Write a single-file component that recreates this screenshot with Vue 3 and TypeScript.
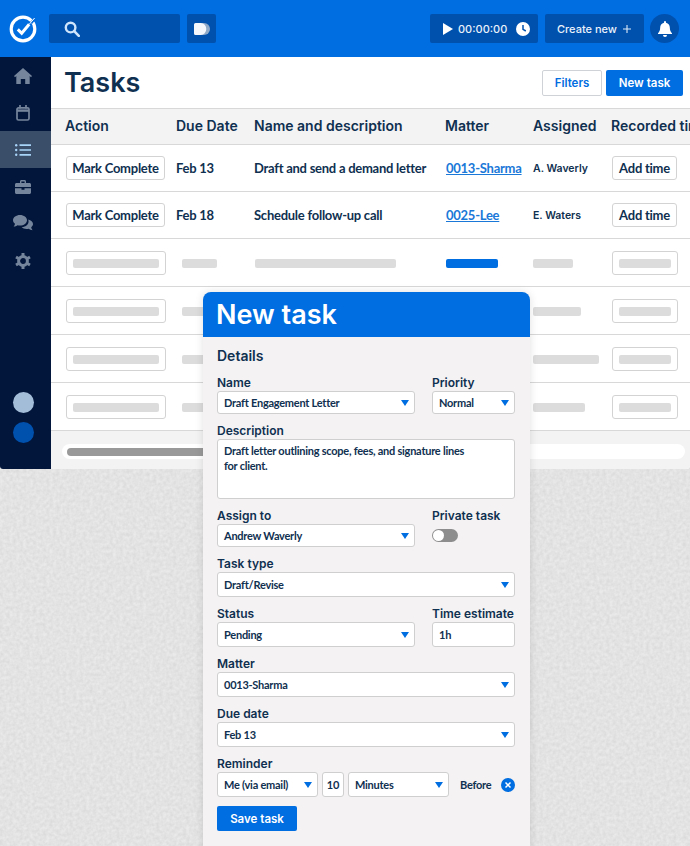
<script setup lang="ts">
interface TaskRow {
  due: string;
  name: string;
  matter: string;
  assigned: string;
}

interface SkeletonRow {
  matterActive: boolean;
  assignedWidth: number;
}

const tasks: TaskRow[] = [
  { due: 'Feb 13', name: 'Draft and send a demand letter', matter: '0013-Sharma', assigned: 'A. Waverly' },
  { due: 'Feb 18', name: 'Schedule follow-up call', matter: '0025-Lee', assigned: 'E. Waters' },
];

const skeletons: SkeletonRow[] = [
  { matterActive: true, assignedWidth: 40 },
  { matterActive: false, assignedWidth: 48 },
  { matterActive: false, assignedWidth: 66 },
  { matterActive: false, assignedWidth: 52 },
];
</script>

<template>
  <div class="page">
    <!-- paper grain behind the app window -->
    <svg class="grain" width="690" height="846" aria-hidden="true">
      <filter id="grain-noise">
        <feTurbulence type="fractalNoise" baseFrequency="0.3" numOctaves="2" seed="4" />
        <feColorMatrix values="0 0 0 0 0  0 0 0 0 0  0 0 0 0 0  0.1 0 0 0 -0.02" />
      </filter>
      <rect width="690" height="846" filter="url(#grain-noise)" />
    </svg>

    <div class="app">
      <header class="topbar">
        <svg class="logo" viewBox="0 0 28 28" width="28" height="28" aria-label="Logo">
          <circle cx="14" cy="14" r="11.8" fill="none" stroke="#fff" stroke-width="3.200" />
          <path d="M22 8.200L27 2.500" fill="none" stroke="#006de0" stroke-width="2.600" />
          <path d="M8.800 14.400l3.900 3.800 7.500-8.900" fill="none" stroke="#fff" stroke-width="3" />
          <path d="M20.200 9.300l5.400-6.300" fill="none" stroke="#fff" stroke-width="1" />
        </svg>
        <div class="search">
          <svg viewBox="0 0 16 16" width="16" height="16">
            <circle cx="6.600" cy="6.600" r="4.800" fill="none" stroke="#cfe5fb" stroke-width="2.400" />
            <path d="M10.200 10.200l4.600 4.600" stroke="#cfe5fb" stroke-width="2.600" stroke-linecap="round" />
          </svg>
        </div>
        <div class="icon-box">
          <svg viewBox="0 0 16 12" width="16" height="12">
            <path d="M6 0h4a6 6 0 0 1 0 12H6z" fill="#8fa9c9" />
            <path d="M1.500 0h5.300a5.500 6 0 0 1 0 12H1.500A1.500 1.500 0 0 1 0 10.500V1.500A1.500 1.500 0 0 1 1.500 0z" fill="#f4f7fb" />
          </svg>
        </div>
        <div class="timer">
          <svg viewBox="0 0 10 12" width="10" height="12"><path d="M0 0l10 6-10 6z" fill="#fff" /></svg>
          <span>00:00:00</span>
          <svg viewBox="0 0 14 14" width="14" height="14">
            <circle cx="7" cy="7" r="7" fill="#fff" />
            <path d="M7 3v4.300l2.800 1.700" fill="none" stroke="#0050ad" stroke-width="1.500" />
          </svg>
        </div>
        <div class="create">
          <span>Create new</span>
          <svg viewBox="0 0 8 8" width="8" height="8"><path d="M4 0v8M0 4h8" stroke="#dce9f8" stroke-width="1.100" /></svg>
        </div>
        <div class="bell">
          <svg viewBox="0 0 14 16" width="14" height="16">
            <path d="M7 0a1 1 0 0 1 1 1v.700c2.500.500 3.800 2.500 3.800 4.800 0 3.300 1 4.400 2.200 5.700v.800H0v-.800c1.200-1.300 2.200-2.400 2.200-5.700C2.200 4.200 3.500 2.200 6 1.700V1a1 1 0 0 1 1-1zM5 14h4a2 2 0 0 1-4 0z" fill="#fff" />
          </svg>
        </div>
      </header>

      <div class="shell">
        <nav class="sidebar">
          <div class="nav-item">
            <svg viewBox="0 0 18 16" width="18" height="16"><path d="M9 0l9 8-1 1.200-1.300-1.100V16h-4.500v-5H6.800v5H2.300V8.100L1 9.200 0 8z" fill="#75859c" /></svg>
          </div>
          <div class="nav-item">
            <svg viewBox="0 0 14 16" width="14" height="16">
              <rect x="1" y="2.800" width="12" height="12.200" rx="1.500" fill="none" stroke="#75859c" stroke-width="1.700" />
              <path d="M1 5.600h12" stroke="#75859c" stroke-width="2.400" />
              <path d="M4 0v3.500M10 0v3.500" stroke="#75859c" stroke-width="1.700" />
            </svg>
          </div>
          <div class="nav-item nav-item--active">
            <svg viewBox="0 0 16 12" width="16" height="12">
              <path d="M4.500 1.200H16M4.500 6H16M4.500 10.800H16" stroke="#a8d4f8" stroke-width="1.700" />
              <circle cx="1.200" cy="1.200" r="1.200" fill="#a8d4f8" />
              <circle cx="1.200" cy="6" r="1.200" fill="#a8d4f8" />
              <circle cx="1.200" cy="10.800" r="1.200" fill="#a8d4f8" />
            </svg>
          </div>
          <div class="nav-item">
            <svg viewBox="0 0 16 14" width="16" height="14">
              <path d="M5 3V1.500C5 .700 5.600 0 6.400 0h3.200c.800 0 1.400.700 1.400 1.500V3h3.500c.800 0 1.500.700 1.500 1.500V7H0V4.500C0 3.700.700 3 1.500 3zm1.400 0h3.200V1.400H6.400zM0 8.200h6.500v1.500h3V8.200H16v4.300c0 .800-.7 1.500-1.500 1.500h-13C.700 14 0 13.300 0 12.500z" fill="#75859c" />
            </svg>
          </div>
          <div class="nav-item">
            <svg viewBox="0 0 20 17" width="20" height="17">
              <path d="M7 0c3.900 0 7 2.300 7 5.300s-3.100 5.300-7 5.300c-.900 0-1.700-.100-2.500-.400C3.600 11 2.200 11.500.600 11.500c.800-.800 1.300-1.700 1.400-2.700C.800 7.900 0 6.700 0 5.300 0 2.300 3.100 0 7 0z" fill="#75859c" />
              <path d="M15.300 4.400C18 5 20 6.800 20 9c0 1.300-.700 2.400-1.800 3.200.100.900.600 2 1.400 3-1.600-.100-2.900-.700-3.900-1.500-.700.200-1.400.300-2.200.300-2 0-3.800-.800-4.900-2 4.300-.100 8-2.700 6.700-7.600z" fill="#75859c" />
            </svg>
          </div>
          <div class="nav-item">
            <svg viewBox="0 0 16 16" width="16" height="16">
              <circle cx="8" cy="8" r="4.400" fill="none" stroke="#75859c" stroke-width="3" />
              <path d="M8 0v3M8 13v3M1 4l2.600 1.500M12.400 10.500L15 12M1 12l2.600-1.500M12.400 5.500L15 4" stroke="#75859c" stroke-width="3" />
            </svg>
          </div>
          <div class="avatars">
            <span class="avatar avatar--light"></span>
            <span class="avatar avatar--blue"></span>
          </div>
        </nav>

        <main class="content">
          <div class="title-row">
            <h1>Tasks</h1>
            <div class="title-actions">
              <button class="btn-outline">Filters</button>
              <button class="btn-primary">New task</button>
            </div>
          </div>

          <div class="row row--head">
            <span>Action</span>
            <span>Due Date</span>
            <span>Name and description</span>
            <span>Matter</span>
            <span>Assigned</span>
            <span>Recorded time</span>
          </div>

          <div v-for="task in tasks" :key="task.matter" class="row row--task">
            <span><button class="btn-small btn-small--action">Mark Complete</button></span>
            <span>{{ task.due }}</span>
            <span>{{ task.name }}</span>
            <a class="matter-link">{{ task.matter }}</a>
            <span class="assigned">{{ task.assigned }}</span>
            <span><button class="btn-small btn-small--time">Add time</button></span>
          </div>

          <div v-for="(sk, i) in skeletons" :key="i" class="row row--skeleton">
            <span class="sk-button sk-button--action"><i></i></span>
            <span class="bar bar--date"></span>
            <span class="bar bar--name"></span>
            <span class="bar bar--matter" :class="{ 'bar--active': sk.matterActive }"></span>
            <span class="bar" :style="{ width: sk.assignedWidth + 'px' }"></span>
            <span class="sk-button sk-button--time"><i></i></span>
          </div>

          <div class="table-foot">
            <div class="scroll-track"><div class="scroll-thumb"></div></div>
          </div>
        </main>
      </div>
    </div>

    <section class="modal">
      <div class="modal-head">New task</div>
      <form class="modal-body" @submit.prevent>
        <h2>Details</h2>

        <div class="two-col two-col--first">
          <label class="field">
            <span class="label">Name</span>
            <span class="select select--short">Draft Engagement Letter</span>
          </label>
          <label class="field">
            <span class="label">Priority</span>
            <span class="select select--short">Normal</span>
          </label>
        </div>

        <label class="field field--gap">
          <span class="label">Description</span>
          <span class="textarea">Draft letter outlining scope, fees, and signature lines<br />for client.</span>
        </label>

        <div class="two-col two-col--gap">
          <label class="field">
            <span class="label">Assign to</span>
            <span class="select select--short">Andrew Waverly</span>
          </label>
          <div class="field">
            <span class="label">Private task</span>
            <span class="toggle"><i></i></span>
          </div>
        </div>

        <label class="field field--gap">
          <span class="label">Task type</span>
          <span class="select">Draft/Revise</span>
        </label>

        <div class="two-col two-col--gap">
          <label class="field">
            <span class="label">Status</span>
            <span class="select">Pending</span>
          </label>
          <label class="field">
            <span class="label">Time estimate</span>
            <span class="input">1h</span>
          </label>
        </div>

        <label class="field field--gap">
          <span class="label">Matter</span>
          <span class="select">0013-Sharma</span>
        </label>

        <label class="field field--gap">
          <span class="label">Due date</span>
          <span class="select">Feb 13</span>
        </label>

        <div class="field field--gap">
          <span class="label">Reminder</span>
          <div class="reminder">
            <span class="select select--who">Me (via email)</span>
            <span class="input input--num">10</span>
            <span class="select select--unit">Minutes</span>
            <span class="before">Before</span>
            <svg viewBox="0 0 14 14" width="14" height="14">
              <circle cx="7" cy="7" r="7" fill="#006de0" />
              <path d="M4.500 4.500l5 5M9.500 4.500l-5 5" stroke="#fff" stroke-width="1.500" />
            </svg>
          </div>
        </div>

        <button class="btn-primary btn-save">Save task</button>
      </form>
    </section>
  </div>
</template>

<style>
html,
body {
  margin: 0;
  background: #eaeaea;
}
</style>

<style scoped>
.page {
  position: relative;
  width: 690px;
  height: 846px;
  overflow: hidden;
  background: #eaeaea;
  font-family: Lato, 'Noto Sans', sans-serif;
  color: #0f3050;
}

.grain {
  position: absolute;
  left: 0;
  top: 0;
}

.app {
  position: relative;
  height: 469px;
  display: flex;
  flex-direction: column;
  background: #fff;
  border-radius: 0 0 4px 3px;
  overflow: hidden;
}

.topbar {
  height: 57px;
  flex: none;
  display: flex;
  align-items: center;
  background: #006de0;
  padding-left: 9px;
  box-sizing: border-box;
}

.logo {
  flex: none;
  margin-right: 12px;
}

.search {
  width: 131px;
  height: 29px;
  background: #0050ad;
  border-radius: 2px;
  display: flex;
  align-items: center;
  padding-left: 15px;
  box-sizing: border-box;
  margin-right: 7px;
}

.icon-box {
  width: 29px;
  height: 29px;
  background: #0050ad;
  border-radius: 2px;
  display: flex;
  align-items: center;
  justify-content: center;
  margin-right: 214px;
}

.timer,
.create {
  height: 29px;
  background: #0050ad;
  border-radius: 2px;
  display: flex;
  align-items: center;
  box-sizing: border-box;
  color: #eaf2fb;
  font-family: Inter, sans-serif;
  font-size: 11px;
  font-weight: 500;
}

.timer {
  width: 108px;
  padding-left: 13px;
  gap: 5px;
  margin-right: 7px;
}

.timer span {
  width: 50px;
  margin-right: 3px;
}

.create {
  width: 99px;
  padding-left: 12px;
  gap: 6px;
  margin-right: 6px;
}

.bell {
  width: 29px;
  height: 29px;
  border-radius: 50%;
  background: #0050ad;
  display: flex;
  align-items: center;
  justify-content: center;
}

.shell {
  flex: 1;
  display: flex;
  min-height: 0;
}

.sidebar {
  width: 51px;
  flex: none;
  background: #02153a;
  display: flex;
  flex-direction: column;
}

.nav-item {
  height: 37px;
  display: flex;
  align-items: center;
  justify-content: center;
  padding-right: 5px;
}

.nav-item--active {
  background: #3a4d69;
}

.avatars {
  margin-top: 113px;
  padding-right: 5px;
  display: flex;
  flex-direction: column;
  align-items: center;
  gap: 9px;
}

.avatar {
  width: 21px;
  height: 21px;
  border-radius: 50%;
}

.avatar--light {
  background: #a3bdd9;
}

.avatar--blue {
  background: #0050ad;
}

.content {
  flex: 1;
  min-width: 0;
  display: flex;
  flex-direction: column;
  background: #fff;
}

.title-row {
  height: 51px;
  flex: none;
  display: flex;
  align-items: center;
  justify-content: space-between;
  padding: 0 7px 0 13px;
  box-sizing: border-box;
}

h1 {
  margin: 0;
  font-family: Inter, sans-serif;
  font-size: 27px;
  font-weight: 600;
  color: #0f3050;
}

.title-actions {
  display: flex;
  gap: 4px;
}

button {
  font-family: inherit;
  padding: 0;
}

.btn-outline {
  width: 60px;
  height: 26px;
  border: 1px solid #cfd3d8;
  border-radius: 2px;
  background: #fff;
  color: #006de0;
  font-family: Inter, sans-serif;
  font-size: 11.500px;
  font-weight: 600;
}

.btn-primary {
  width: 77px;
  height: 26px;
  border: none;
  border-radius: 2px;
  background: #006de0;
  color: #fff;
  font-family: Inter, sans-serif;
  font-size: 11.500px;
  font-weight: 600;
}

.row {
  flex: none;
  display: grid;
  grid-template-columns: 111px 78px 191px 88px 78px 79px;
  align-items: center;
  padding-left: 14px;
  border-bottom: 1px solid #d8d8d8;
  box-sizing: border-box;
  white-space: nowrap;
}

.row--head {
  height: 37px;
  padding-bottom: 2px;
  border-top: 1px solid #d8d8d8;
  background: #f4f3f4;
  font-family: Inter, sans-serif;
  font-size: 14px;
  font-weight: 600;
}

.row--task {
  height: 47px;
  font-size: 13px;
  font-weight: 700;
  letter-spacing: -0.25px;
}

.row--skeleton {
  height: 48px;
  padding-top: 1px;
}

.btn-small {
  height: 24px;
  margin-left: 1px;
  border: 1px solid #d3d3d3;
  border-radius: 3px;
  background: #fff;
  color: #0f3050;
  font-size: 13px;
  font-weight: 700;
  letter-spacing: -0.25px;
}

.btn-small--action {
  width: 99px;
}

.btn-small--time {
  width: 65px;
}

.matter-link {
  margin-left: 1px;
  color: #1a78d8;
  text-decoration: underline;
}

.assigned {
  font-family: Inter, sans-serif;
  font-size: 10.500px;
  font-weight: 600;
  letter-spacing: 0;
}

.bar {
  display: block;
  height: 9px;
  background: #dcdcdc;
  border-radius: 2px;
}

.bar--date {
  width: 35px;
  margin-left: 6px;
}

.bar--name {
  width: 141px;
  margin-left: 1px;
}

.bar--matter {
  width: 52px;
  margin-left: 1px;
  background: transparent;
}

.bar--active {
  background: #006de0;
}

.sk-button {
  display: flex;
  align-items: center;
  height: 24px;
  margin-left: 1px;
  padding: 0 6px;
  border: 1px solid #d3d3d3;
  border-radius: 3px;
  box-sizing: border-box;
}

.sk-button--action {
  width: 100px;
}

.sk-button--time {
  width: 66px;
}

.sk-button i {
  flex: 1;
  height: 9px;
  background: #dcdcdc;
  border-radius: 2px;
}

.table-foot {
  flex: 1;
  padding: 13px 5px 0 11px;
  background: #f4f3f4;
}

.scroll-track {
  height: 15px;
  border-radius: 8px;
  background: #fff;
  display: flex;
  align-items: center;
  padding-left: 5px;
}

.scroll-thumb {
  width: 300px;
  height: 8px;
  border-radius: 4px;
  background: #999;
}

.modal {
  position: absolute;
  left: 203px;
  top: 292px;
  width: 327px;
  height: 570px;
  background: #f4f2f3;
  border-radius: 8px 8px 0 0;
  box-shadow: 0 0 8px rgba(0, 0, 0, 0.12);
}

.modal-head {
  height: 45px;
  display: flex;
  align-items: center;
  padding-left: 13px;
  background: #006de0;
  border-radius: 8px 8px 0 0;
  color: #fff;
  font-family: Inter, sans-serif;
  font-size: 27px;
  font-weight: 600;
}

.modal-body {
  padding: 10px 15px 0 14px;
  display: flex;
  flex-direction: column;
}

h2 {
  margin: 0;
  height: 17px;
  line-height: 17px;
  font-family: Inter, sans-serif;
  font-size: 14px;
  font-weight: 600;
}

.two-col {
  display: grid;
  grid-template-columns: 198px 83px;
  column-gap: 17px;
}

.two-col--first {
  margin-top: 11px;
}

.two-col--gap,
.field--gap {
  margin-top: 9px;
}

.field {
  display: flex;
  flex-direction: column;
}

.label {
  height: 15px;
  line-height: 15px;
  margin-bottom: 1px;
  font-family: Inter, sans-serif;
  font-size: 12px;
  font-weight: 600;
  white-space: nowrap;
}

.select,
.input,
.textarea {
  display: flex;
  align-items: center;
  height: 25px;
  padding: 0 6px;
  background: #fff;
  border: 1px solid #cfcfcf;
  border-radius: 3px;
  box-sizing: border-box;
  font-size: 11px;
  font-weight: 700;
  letter-spacing: -0.25px;
  position: relative;
  white-space: nowrap;
}

.select--short {
  height: 23px;
}

.select::after {
  content: '';
  position: absolute;
  right: 5px;
  top: 50%;
  margin-top: -3px;
  border-left: 4px solid transparent;
  border-right: 4px solid transparent;
  border-top: 6px solid #006de0;
}

.textarea {
  display: block;
  height: 60px;
  padding: 3px 6px;
  line-height: 15px;
}

.toggle {
  display: block;
  width: 26px;
  height: 13px;
  margin-top: 5px;
  border-radius: 7px;
  background: #8d8d8d;
  position: relative;
}

.toggle i {
  position: absolute;
  left: 1px;
  top: 1px;
  width: 11px;
  height: 11px;
  border-radius: 50%;
  background: #fff;
}

.reminder {
  display: flex;
  align-items: center;
}

.reminder > * {
  flex: none;
}

.select--who {
  width: 101px;
  margin-right: 4px;
}

.input--num {
  width: 22px;
  margin-right: 4px;
  justify-content: center;
  padding: 0;
}

.select--unit {
  width: 101px;
  margin-right: 11px;
}

.before {
  width: 31px;
  margin-right: 10px;
  font-size: 11px;
  font-weight: 700;
  letter-spacing: -0.25px;
}

.btn-save {
  width: 80px;
  height: 25px;
  margin-top: 9px;
}
</style>
